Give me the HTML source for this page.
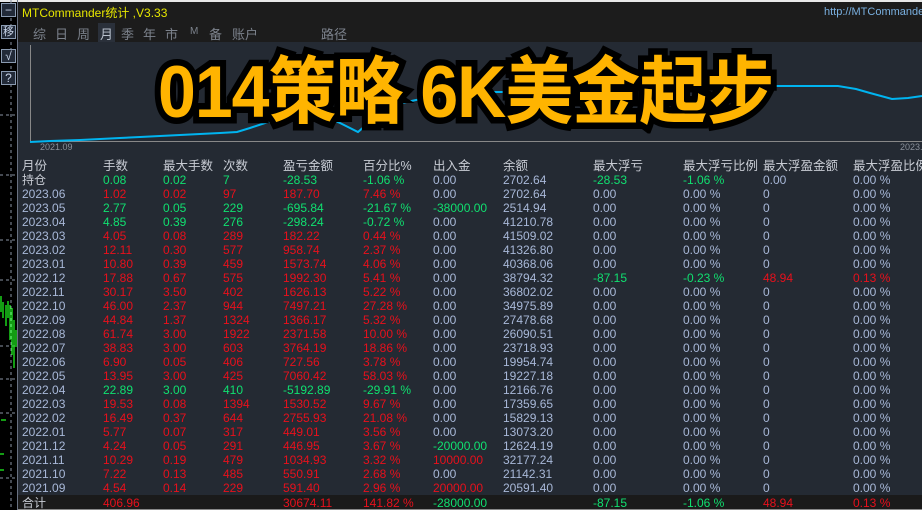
<!DOCTYPE html>
<html><head><meta charset="utf-8"><style>
*{margin:0;padding:0;box-sizing:border-box}
body{width:922px;height:510px;background:#000;overflow:hidden;position:relative;font-family:"Liberation Sans","Noto Sans CJK SC",sans-serif;font-size:12px}
.ab{position:absolute}
.btn{position:absolute;left:1px;width:15px;height:14px;border:1px solid #8a9ab0;background:#222a38;color:#c8d4e8;font-size:12px;line-height:12px;text-align:center}
#title{left:18px;top:0;width:904px;height:22px;background:#1c1c1c;border-top:2px solid #e8e8e8}
#tabs{left:18px;top:22px;width:904px;height:20px;background:#1c1c1c}
#tabs span{position:absolute;top:2px;color:#7c828c;font-size:13px}
#chart{left:18px;top:42px;width:904px;height:108px;background:#242a33}
#tbl{left:18px;top:150px;width:904px;height:345px;background:#242a33}
.r{position:absolute;left:0;width:904px;height:14px;line-height:14px}
.r span{position:absolute;top:0;white-space:nowrap}
.r span:nth-child(1){left:4px;color:#a8b8d8}
.r span:nth-child(2){left:85px}
.r span:nth-child(3){left:145px}
.r span:nth-child(4){left:205px}
.r span:nth-child(5){left:265px}
.r span:nth-child(6){left:345px}
.r span:nth-child(7){left:415px;color:#a8b8d8}
.r span:nth-child(8){left:485px;color:#a8b8d8}
.r span:nth-child(9){left:575px;color:#a8b8d8}
.r span:nth-child(10){left:665px;color:#a8b8d8}
.r span:nth-child(11){left:745px;color:#a8b8d8}
.r span:nth-child(12){left:835px;color:#a8b8d8}
.R span:nth-child(n+2):nth-child(-n+6){color:#e8101c}
.G span:nth-child(n+2):nth-child(-n+6){color:#10e070}
.r span.g{color:#10e070}.r span.rd{color:#e8101c}
.h span{color:#c8ccd4!important;font-size:12.5px}
#big{left:158px;top:51px;font-size:68px;font-weight:bold;color:#ffb400;-webkit-text-stroke:12px #000;paint-order:stroke fill;letter-spacing:-1px;white-space:nowrap;line-height:76px;transform:scaleY(1.08);transform-origin:0 0;font-family:"Liberation Sans","Noto Sans CJK SC",sans-serif}
</style></head><body>
<div class="ab" style="left:0;top:0;width:922px;height:2px;background:#e8e8e8"></div>
<svg class="ab" style="left:0;top:0" width="18" height="510">
<line x1="11" y1="0" x2="11" y2="510" stroke="#8a94a4" stroke-dasharray="3,3"/>
<line x1="0" y1="115" x2="16" y2="115" stroke="#8a94a4" stroke-dasharray="3,3"/>
<line x1="0" y1="175" x2="16" y2="175" stroke="#8a94a4" stroke-dasharray="3,3"/>
<line x1="0" y1="240" x2="16" y2="240" stroke="#8a94a4" stroke-dasharray="3,3"/>
<line x1="0" y1="280" x2="16" y2="280" stroke="#8a94a4" stroke-dasharray="3,3"/>
<line x1="0" y1="346" x2="16" y2="346" stroke="#8a94a4" stroke-dasharray="3,3"/>
<line x1="0" y1="379" x2="16" y2="379" stroke="#8a94a4" stroke-dasharray="3,3"/>
<line x1="0" y1="413" x2="16" y2="413" stroke="#8a94a4" stroke-dasharray="3,3"/>
<line x1="0" y1="478" x2="16" y2="478" stroke="#8a94a4" stroke-dasharray="3,3"/>
<g stroke="#20f020" stroke-width="1.3">
<line x1="1" y1="296" x2="1" y2="312"/><line x1="3" y1="302" x2="3" y2="318"/><line x1="6" y1="305" x2="6" y2="326"/>
<line x1="8" y1="301" x2="8" y2="318"/><line x1="10" y1="305" x2="10" y2="340"/><line x1="12" y1="308" x2="12" y2="355"/>
<line x1="14" y1="320" x2="14" y2="368"/><line x1="16" y1="330" x2="16" y2="347"/>
</g>
<g stroke="#20f020" stroke-width="1.3"><line x1="1" y1="420" x2="6" y2="420"/><line x1="0" y1="454" x2="4" y2="454"/><line x1="0" y1="470" x2="4" y2="470"/></g>
</svg>
<div class="ab" style="left:17px;top:0;width:1px;height:510px;background:#6a7282"></div>
<div class="btn" style="top:3px">−</div>
<div class="btn" style="top:25px;font-size:11px">移</div>
<div class="btn" style="top:49px">√</div>
<div class="btn" style="top:71px">?</div>

<div id="title" class="ab"><span class="ab" style="left:4px;top:2px;color:#e6e600;font-size:12px">MTCommander统计 ,V3.33</span><span class="ab" style="left:806px;top:4px;color:#7ab0e0;font-size:11px">http://MTCommander</span></div>
<div id="tabs" class="ab">
<span style="left:15px">综</span><span style="left:37px">日</span><span style="left:59px">周</span>
<span style="left:80px;top:1px;padding:1px 2px;background:#2a303a;color:#b8c0cc">月</span>
<span style="left:103px">季</span><span style="left:125px">年</span><span style="left:147px">市</span>
<span style="left:172px;font-size:10px;top:4px">M</span><span style="left:191px">备</span><span style="left:214px">账户</span><span style="left:303px">路径</span>
</div>
<div id="chart" class="ab">
<svg width="904" height="108" style="position:absolute;left:0;top:0">
<line x1="12.5" y1="3" x2="12.5" y2="100" stroke="#888"/>
<line x1="12" y1="99.5" x2="904" y2="99.5" stroke="#888"/>
<polyline fill="none" stroke="#00b4f0" stroke-width="2" points="12,100 32,99 62,98 82,97 102,96 122,95 142,94 162,93 182,92 202,91 219,90 232,86 250,80 262,76 275,74 295,74 305,74 322,81 340,90 348,83 370,64 398,58 430,54 470,50 505,50 540,49 570,48 610,47 640,46 680,45 700,44 745,44 790,44 820,44 838,47 852,51 874,57 890,56 904,54"/>
<text x="22" y="108" fill="#8a909a" font-size="9" font-family="Liberation Sans">2021.09</text>
<text x="882" y="108" fill="#8a909a" font-size="9" font-family="Liberation Sans">2023.</text>
</svg>
</div>
<div id="tbl" class="ab">
<div class="r h" style="top:9px"><span>月份</span><span>手数</span><span>最大手数</span><span>次数</span><span>盈亏金额</span><span>百分比%</span><span>出入金</span><span>余额</span><span>最大浮亏</span><span>最大浮亏比例</span><span>最大浮盈金额</span><span>最大浮盈比例</span></div>
<div class="r G" style="top:23px"><span style="color:#c8ccd4">持仓</span><span>0.08</span><span>0.02</span><span>7</span><span>-28.53</span><span>-1.06 %</span><span>0.00</span><span>2702.64</span><span class="g">-28.53</span><span class="g">-1.06 %</span><span>0.00</span><span>0.00 %</span></div>
<div class="r R" style="top:37px"><span>2023.06</span><span>1.02</span><span>0.02</span><span>97</span><span>187.70</span><span>7.46 %</span><span>0.00</span><span>2702.64</span><span>0.00</span><span>0.00 %</span><span>0</span><span>0.00 %</span></div>
<div class="r G" style="top:51px"><span>2023.05</span><span>2.77</span><span>0.05</span><span>229</span><span>-695.84</span><span>-21.67 %</span><span class="g">-38000.00</span><span>2514.94</span><span>0.00</span><span>0.00 %</span><span>0</span><span>0.00 %</span></div>
<div class="r G" style="top:65px"><span>2023.04</span><span>4.85</span><span>0.39</span><span>276</span><span>-298.24</span><span>-0.72 %</span><span>0.00</span><span>41210.78</span><span>0.00</span><span>0.00 %</span><span>0</span><span>0.00 %</span></div>
<div class="r R" style="top:79px"><span>2023.03</span><span>4.05</span><span>0.08</span><span>289</span><span>182.22</span><span>0.44 %</span><span>0.00</span><span>41509.02</span><span>0.00</span><span>0.00 %</span><span>0</span><span>0.00 %</span></div>
<div class="r R" style="top:93px"><span>2023.02</span><span>12.11</span><span>0.30</span><span>577</span><span>958.74</span><span>2.37 %</span><span>0.00</span><span>41326.80</span><span>0.00</span><span>0.00 %</span><span>0</span><span>0.00 %</span></div>
<div class="r R" style="top:107px"><span>2023.01</span><span>10.80</span><span>0.39</span><span>459</span><span>1573.74</span><span>4.06 %</span><span>0.00</span><span>40368.06</span><span>0.00</span><span>0.00 %</span><span>0</span><span>0.00 %</span></div>
<div class="r R" style="top:121px"><span>2022.12</span><span>17.88</span><span>0.67</span><span>575</span><span>1992.30</span><span>5.41 %</span><span>0.00</span><span>38794.32</span><span class="g">-87.15</span><span class="g">-0.23 %</span><span class="rd">48.94</span><span class="rd">0.13 %</span></div>
<div class="r R" style="top:135px"><span>2022.11</span><span>30.17</span><span>3.50</span><span>402</span><span>1626.13</span><span>5.22 %</span><span>0.00</span><span>36802.02</span><span>0.00</span><span>0.00 %</span><span>0</span><span>0.00 %</span></div>
<div class="r R" style="top:149px"><span>2022.10</span><span>46.00</span><span>2.37</span><span>944</span><span>7497.21</span><span>27.28 %</span><span>0.00</span><span>34975.89</span><span>0.00</span><span>0.00 %</span><span>0</span><span>0.00 %</span></div>
<div class="r R" style="top:163px"><span>2022.09</span><span>44.84</span><span>1.37</span><span>1324</span><span>1366.17</span><span>5.32 %</span><span>0.00</span><span>27478.68</span><span>0.00</span><span>0.00 %</span><span>0</span><span>0.00 %</span></div>
<div class="r R" style="top:177px"><span>2022.08</span><span>61.74</span><span>3.00</span><span>1922</span><span>2371.58</span><span>10.00 %</span><span>0.00</span><span>26090.51</span><span>0.00</span><span>0.00 %</span><span>0</span><span>0.00 %</span></div>
<div class="r R" style="top:191px"><span>2022.07</span><span>38.83</span><span>3.00</span><span>603</span><span>3764.19</span><span>18.86 %</span><span>0.00</span><span>23718.93</span><span>0.00</span><span>0.00 %</span><span>0</span><span>0.00 %</span></div>
<div class="r R" style="top:205px"><span>2022.06</span><span>6.90</span><span>0.05</span><span>406</span><span>727.56</span><span>3.78 %</span><span>0.00</span><span>19954.74</span><span>0.00</span><span>0.00 %</span><span>0</span><span>0.00 %</span></div>
<div class="r R" style="top:219px"><span>2022.05</span><span>13.95</span><span>3.00</span><span>425</span><span>7060.42</span><span>58.03 %</span><span>0.00</span><span>19227.18</span><span>0.00</span><span>0.00 %</span><span>0</span><span>0.00 %</span></div>
<div class="r G" style="top:233px"><span>2022.04</span><span>22.89</span><span>3.00</span><span>410</span><span>-5192.89</span><span>-29.91 %</span><span>0.00</span><span>12166.76</span><span>0.00</span><span>0.00 %</span><span>0</span><span>0.00 %</span></div>
<div class="r R" style="top:247px"><span>2022.03</span><span>19.53</span><span>0.08</span><span>1394</span><span>1530.52</span><span>9.67 %</span><span>0.00</span><span>17359.65</span><span>0.00</span><span>0.00 %</span><span>0</span><span>0.00 %</span></div>
<div class="r R" style="top:261px"><span>2022.02</span><span>16.49</span><span>0.37</span><span>644</span><span>2755.93</span><span>21.08 %</span><span>0.00</span><span>15829.13</span><span>0.00</span><span>0.00 %</span><span>0</span><span>0.00 %</span></div>
<div class="r R" style="top:275px"><span>2022.01</span><span>5.77</span><span>0.07</span><span>317</span><span>449.01</span><span>3.56 %</span><span>0.00</span><span>13073.20</span><span>0.00</span><span>0.00 %</span><span>0</span><span>0.00 %</span></div>
<div class="r R" style="top:289px"><span>2021.12</span><span>4.24</span><span>0.05</span><span>291</span><span>446.95</span><span>3.67 %</span><span class="g">-20000.00</span><span>12624.19</span><span>0.00</span><span>0.00 %</span><span>0</span><span>0.00 %</span></div>
<div class="r R" style="top:303px"><span>2021.11</span><span>10.29</span><span>0.19</span><span>479</span><span>1034.93</span><span>3.32 %</span><span class="rd">10000.00</span><span>32177.24</span><span>0.00</span><span>0.00 %</span><span>0</span><span>0.00 %</span></div>
<div class="r R" style="top:317px"><span>2021.10</span><span>7.22</span><span>0.13</span><span>485</span><span>550.91</span><span>2.68 %</span><span>0.00</span><span>21142.31</span><span>0.00</span><span>0.00 %</span><span>0</span><span>0.00 %</span></div>
<div class="r R" style="top:331px"><span>2021.09</span><span>4.54</span><span>0.14</span><span>229</span><span>591.40</span><span>2.96 %</span><span class="rd">20000.00</span><span>20591.40</span><span>0.00</span><span>0.00 %</span><span>0</span><span>0.00 %</span></div>
</div>
<div class="ab" style="left:18px;top:495px;width:904px;height:14px;background:#1a1a1a">
<div class="r R" style="top:1px"><span style="color:#c8ccd4">合计</span><span>406.96</span><span></span><span></span><span>30674.11</span><span>141.82 %</span><span class="g">-28000.00</span><span></span><span class="g">-87.15</span><span class="g">-1.06 %</span><span class="rd">48.94</span><span class="rd">0.13 %</span></div>
</div>
<div class="ab" style="left:18px;top:509px;width:904px;height:1px;background:#888"></div>
<div id="big" class="ab">014策略 6K美金起步</div>
</body></html>
